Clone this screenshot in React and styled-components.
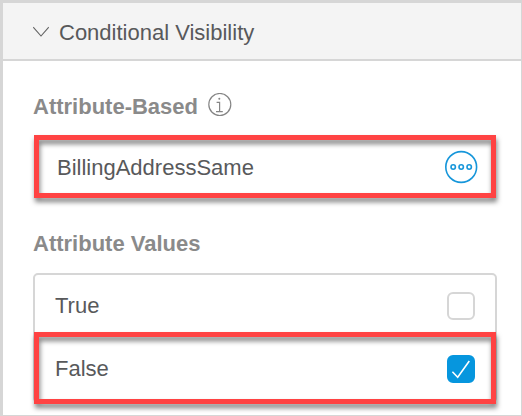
import React from 'react';
import styled, { createGlobalStyle, css } from 'styled-components';

const GlobalStyle = createGlobalStyle`
  * { box-sizing: border-box; }
  body { margin: 0; background: #fff; }
`;

const Panel = styled.main`
  width: 522px;
  height: 416px;
  border: solid #d6d6d6;
  border-width: 3px 1px 1px 3px;
  overflow: hidden;
  background: #fff;
  color: #58595b;
  font: 22px/26px "Liberation Sans", Arial, sans-serif;
`;

const Header = styled.header`
  height: 58px;
  padding: 2px 0 0 30px;
  display: flex;
  align-items: center;
  gap: 10px;
  background: #f4f4f4;
  border-bottom: 2px solid #d6d6d6;
`;

const Title = styled.span`
  padding-top: 2px;
  white-space: nowrap;
`;

const Body = styled.div`
  padding: 33px 24px 0 30px;
`;

const Label = styled.div`
  height: 26px;
  display: flex;
  align-items: center;
  gap: 10px;
  color: #8a8a8a;
  font-weight: bold;
  white-space: nowrap;
`;

const highlight = css`
  position: relative;
  &::after {
    content: '';
    position: absolute;
    inset: ${(p) => p.$inset || '0'};
    border: 5px solid #ff4343;
    filter: drop-shadow(1px 4px 2.5px rgba(0, 0, 0, 0.5));
    pointer-events: none;
  }
`;

const Field = styled.div`
  height: 63px;
  margin: 15px 1px 33px;
  padding: 0 18px 0 23px;
  display: flex;
  align-items: center;
  justify-content: space-between;
  ${highlight}
`;

const FieldValue = styled.span`
  padding-top: 2px;
`;

const List = styled.div`
  height: 130px;
  margin-top: 16px;
  border: 2px solid #d6d6d6;
  border-radius: 5px;
`;

const Row = styled.div`
  height: 63px;
  padding: 0 20px 2px;
  display: flex;
  align-items: center;
  justify-content: space-between;
  ${(p) => p.$highlighted && highlight}
`;

const Checkbox = styled.span`
  width: 28px;
  height: 28px;
  border: 2px solid ${(p) => (p.$checked ? '#0696de' : '#d6d6d6')};
  border-radius: 6px;
  background: ${(p) => (p.$checked ? '#0696de' : '#fff')};
`;

const Icon = styled.svg`
  display: block;
  flex: none;
  fill: none;
`;

const InfoIcon = styled(Icon)`
  margin-bottom: 4px;
`;

function Option({ label, checked, highlighted }) {
  return (
    <Row $highlighted={highlighted} $inset="-6px -1px -3px">
      <span>{label}</span>
      <Checkbox $checked={checked}>
        {checked && (
          <Icon width="24" height="24" viewBox="0 0 24 24" stroke="#fff" strokeWidth="1.6">
            <path d="M3.4 14.7 8.7 20.2 20.3 4" />
          </Icon>
        )}
      </Checkbox>
    </Row>
  );
}

export default function App() {
  return (
    <>
      <GlobalStyle />
      <Panel>
        <Header>
          <Icon width="16" height="12" viewBox="0 0 16 12" stroke="#626262" strokeWidth="1.1">
            <path d="M0.2 1.2 8 10 15.8 1.2" />
          </Icon>
          <Title>Conditional Visibility</Title>
        </Header>
        <Body>
          <Label>
            Attribute-Based
            <InfoIcon width="24" height="24" viewBox="0 0 24 24" stroke="#858585" strokeWidth="1.2">
              <circle cx="11.8" cy="11.5" r="11" />
              <path d="M8.6 9.4h3v9.2M8 18.6h6.8" />
              <circle cx="11.3" cy="5.7" r="1" fill="#858585" stroke="none" />
            </InfoIcon>
          </Label>
          <Field>
            <FieldValue>BillingAddressSame</FieldValue>
            <Icon width="34" height="34" viewBox="0 0 34 34" stroke="#1696da" strokeWidth="1.6">
              <circle cx="17.2" cy="17" r="15.4" />
              <circle cx="9.2" cy="17" r="2.2" />
              <circle cx="17.2" cy="17" r="2.2" />
              <circle cx="25.2" cy="17" r="2.2" />
            </Icon>
          </Field>
          <Label>Attribute Values</Label>
          <List>
            <Option label="True" />
            <Option label="False" checked highlighted />
          </List>
        </Body>
      </Panel>
    </>
  );
}
